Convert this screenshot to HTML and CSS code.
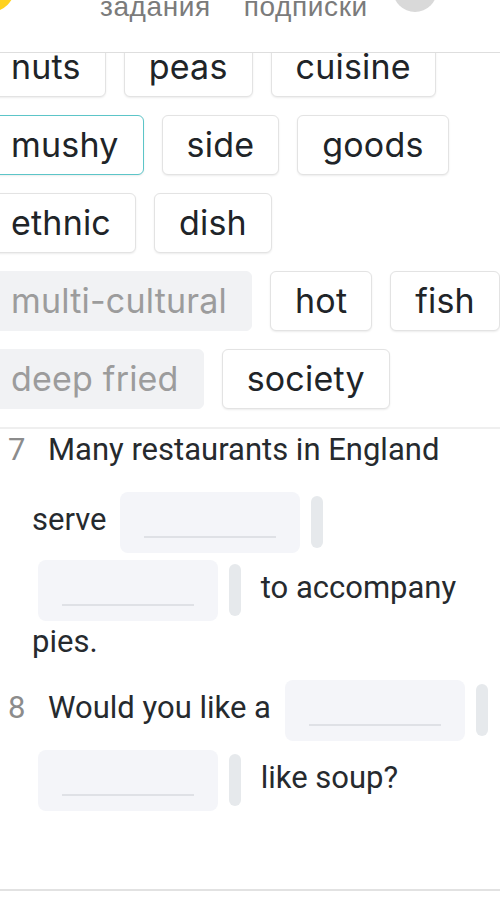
FILE: index.html
```html
<!DOCTYPE html>
<html lang="ru">
<head>
  <meta charset="UTF-8">
  <title>Задание - заполните пропуски</title>
  <link rel="stylesheet" href="styles.css">
</head>
<body>
  <header class="topbar">
    <span class="logo"></span>
    <nav class="topnav">
      <a href="#">задания</a>
      <a href="#">подписки</a>
    </nav>
    <span class="avatar"></span>
  </header>

  <main class="exercise">
    <div class="wordbank">
      <span class="chip">nuts</span>
      <span class="chip">peas</span>
      <span class="chip">cuisine</span>
      <span class="chip chip-active">mushy</span>
      <span class="chip">side</span>
      <span class="chip">goods</span>
      <span class="chip">ethnic</span>
      <span class="chip">dish</span>
      <span class="chip chip-used">multi-cultural</span>
      <span class="chip">hot</span>
      <span class="chip">fish</span>
      <span class="chip chip-used">deep fried</span>
      <span class="chip">society</span>
    </div>

    <ol class="questions">
      <li class="question"><span class="qnum">7</span>Many restaurants in England serve <span class="blank"><span class="blank-line"></span></span><span class="handle"></span> <span class="blank"><span class="blank-line"></span></span><span class="handle"></span> to accompany pies.</li>
      <li class="question"><span class="qnum">8</span>Would you like a <span class="blank"><span class="blank-line"></span></span><span class="handle"></span> <span class="blank"><span class="blank-line"></span></span><span class="handle"></span> like soup?</li>
    </ol>
  </main>
</body>
</html>
```

FILE: styles.css
```css
body {
  margin: 0;
  background-color: #ffffff;
  color: #262a2e;
  font-family: Roboto, "Liberation Sans", sans-serif;
  overflow: hidden;
}

/* barre du haut, on la voit à moitié */
.topbar {
  position: fixed;
  top: 0;
  left: 0;
  right: 0;
  height: 52px;
  background: #ffffff;
  border-bottom: 1px solid #dedede;
  display: flex;
  align-items: flex-start;
  overflow: hidden;
  z-index: 2;
}
.logo {
  flex: none;
  width: 50px;
  height: 50px;
  border-radius: 50%;
  background: #ffd21f;
  margin: -38px 0 0 -35px;
}
.topnav {
  display: flex;
  gap: 33px;
  margin: -9px 0 0 85px;
}
.topnav a {
  color: #7b7b7b;
  text-decoration: none;
  font-family: "Liberation Sans", Arial, sans-serif;
  font-size: 28px;
  letter-spacing: 0.6px;
}
.avatar {
  flex: none;
  width: 44px;
  height: 44px;
  border-radius: 50%;
  background: #d9d9d9;
  margin: -32px 0 0 25px;
}

.exercise {
  min-height: 891px;
  box-sizing: border-box;
  border-bottom: 2px solid #e2e2e2;
}

/* banque de mots */
.wordbank {
  display: flex;
  flex-wrap: wrap;
  gap: 18px;
  margin: 0 -14px;
  padding: 37px 0 18px;
  border-bottom: 2px solid #efefef;
}
.chip {
  height: 58px;
  line-height: 58px;
  padding: 0 24px;
  border: 1px solid #e3e3e3;
  border-radius: 6px;
  background: #ffffff;
  box-shadow: 0 1px 2px rgba(0, 0, 0, 0.08);
  font-family: Inter, "Noto Sans", sans-serif;
  font-size: 34px;
  letter-spacing: 0.2px;
  color: #202428;
  white-space: nowrap;
}
.chip-active {
  border-color: #5cc5c8;
}
.chip-used {
  background: #f1f2f4;
  border-color: #f1f2f4;
  box-shadow: none;
  color: #9c9c9c;
}

/* questions */
.questions {
  list-style: none;
  margin: 0;
  padding: 3px 0 0;
}
.question {
  font-size: 31px;
  line-height: 36px;
  padding-left: 32px;
  text-indent: -24px;
  margin-bottom: 16px;
}
.qnum {
  display: inline-block;
  width: 40px;
  padding-bottom: 20px;
  text-indent: 0;
  color: #8c8c8c;
}
.blank {
  display: inline-block;
  width: 180px;
  height: 61px;
  margin: 4px 5px 3px 6px;
  border-radius: 8px;
  background: #f4f5f9;
  vertical-align: middle;
  text-indent: 0;
}
.blank-line {
  display: block;
  height: 2px;
  margin: 44px 24px 0;
  background: #dfe1e6;
}
.handle {
  display: inline-block;
  width: 12px;
  height: 52px;
  margin: 0 12px 0 6px;
  border-radius: 6px;
  background: #e6e9ec;
  vertical-align: middle;
}
```
